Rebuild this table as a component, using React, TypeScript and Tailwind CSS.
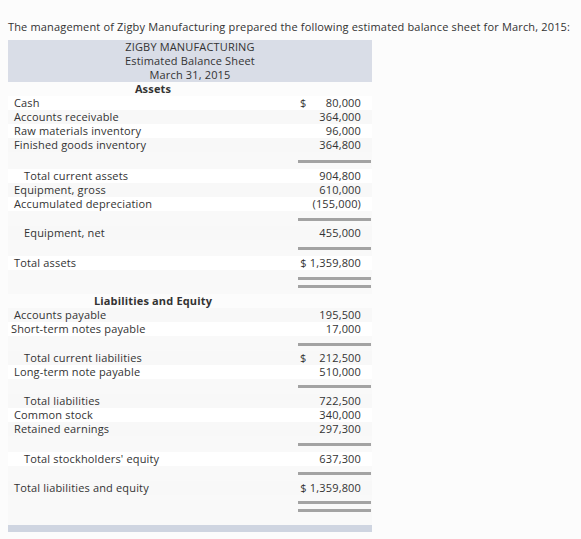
import React from 'react';

type Row =
  | { kind: 'item'; label: string; amount?: string; dollar?: boolean; indent?: 'in' | 'out' | 'none' }
  | { kind: 'head'; label: string }
  | { kind: 'rule'; h: string; top: string }
  | { kind: 'double'; h: string; top: string };

const rows: Row[] = [
  { kind: 'head', label: 'Assets' },
  { kind: 'item', label: 'Cash', amount: '80,000', dollar: true },
  { kind: 'item', label: 'Accounts receivable', amount: '364,000' },
  { kind: 'item', label: 'Raw materials inventory', amount: '96,000' },
  { kind: 'item', label: 'Finished goods inventory', amount: '364,800' },
  { kind: 'rule', h: 'h-[17px]', top: 'mt-[8px]' },
  { kind: 'item', label: 'Total current assets', amount: '904,800', indent: 'in' },
  { kind: 'item', label: 'Equipment, gross', amount: '610,000' },
  { kind: 'item', label: 'Accumulated depreciation', amount: '(155,000)' },
  { kind: 'rule', h: 'h-[15px]', top: 'mt-[7px]' },
  { kind: 'item', label: 'Equipment, net', amount: '455,000', indent: 'in' },
  { kind: 'rule', h: 'h-[16px]', top: 'mt-[7px]' },
  { kind: 'item', label: 'Total assets', amount: '$ 1,359,800' },
  { kind: 'double', h: 'h-[24px]', top: 'mt-[7px]' },
  { kind: 'head', label: 'Liabilities and Equity' },
  { kind: 'item', label: 'Accounts payable', amount: '195,500' },
  { kind: 'item', label: 'Short-term notes payable', amount: '17,000', indent: 'out' },
  { kind: 'rule', h: 'h-[15px]', top: 'mt-[7px]' },
  { kind: 'item', label: 'Total current liabilities', amount: '212,500', dollar: true, indent: 'in' },
  { kind: 'item', label: 'Long-term note payable', amount: '510,000' },
  { kind: 'rule', h: 'h-[15px]', top: 'mt-[6px]' },
  { kind: 'item', label: 'Total liabilities', amount: '722,500', indent: 'in' },
  { kind: 'item', label: 'Common stock', amount: '340,000' },
  { kind: 'item', label: 'Retained earnings', amount: '297,300' },
  { kind: 'rule', h: 'h-[16px]', top: 'mt-[7px]' },
  { kind: 'item', label: "Total stockholders' equity", amount: '637,300', indent: 'in' },
  { kind: 'rule', h: 'h-[15px]', top: 'mt-[6px]' },
  { kind: 'item', label: 'Total liabilities and equity', amount: '$ 1,359,800' },
  { kind: 'double', h: 'h-[30px]', top: 'mt-[6px]' },
];

const App: React.FC = () => {
  let stripe = 0;
  return (
    <div className="min-h-screen bg-[#fcfcfc] text-[#333] text-[11px] leading-[14px] tracking-[0.16px]" style={{ fontFamily: '"Open Sans", Arial, sans-serif' }}>
      <p className="px-2 pt-[20px]">The management of Zigby Manufacturing prepared the following estimated balance sheet for March, 2015:</p>

      <div className="ml-2 mt-[6px] w-[364px]">
        <div className="bg-[#d9dde7] text-center">
          <div>ZIGBY MANUFACTURING</div>
          <div>Estimated Balance Sheet</div>
          <div>March 31, 2015</div>
        </div>

        {rows.map((r, i) => {
          if (r.kind === 'head') {
            return (
              <div key={i} className="flex h-[14px]">
                <div className="w-[290px] text-center font-bold">{r.label}</div>
              </div>
            );
          }
          if (r.kind === 'rule' || r.kind === 'double') {
            return (
              <div key={i} className={`flex ${r.h} bg-[#f9f9f9]`}>
                <div className="w-[290px]" />
                <div className={`w-[73px] ${r.top}`}>
                  <div className="h-[3px] bg-[#a3a3a3]" />
                  {r.kind === 'double' && <div className="mt-[5px] h-[3px] bg-[#a3a3a3]" />}
                </div>
              </div>
            );
          }
          stripe++;
          const bg = stripe % 2 === 1 ? 'bg-white' : 'bg-[#f8f8f8]';
          const pad = r.indent === 'in' ? 'pl-[16px]' : r.indent === 'out' ? 'pl-[3px]' : 'pl-[6px]';
          return (
            <div key={i} className={`flex h-[14px] ${bg}`}>
              <div className={`w-[290px] ${pad}`}>{r.label}</div>
              <div className="flex w-[73px] pr-[10px] pl-[2px]">
                {r.dollar && <span>$</span>}
                <span className="ml-auto">{r.amount}</span>
              </div>
            </div>
          );
        })}

        <div className="h-[7px] bg-[#cfd5e1]" />
      </div>
    </div>
  );
};

export default App;
